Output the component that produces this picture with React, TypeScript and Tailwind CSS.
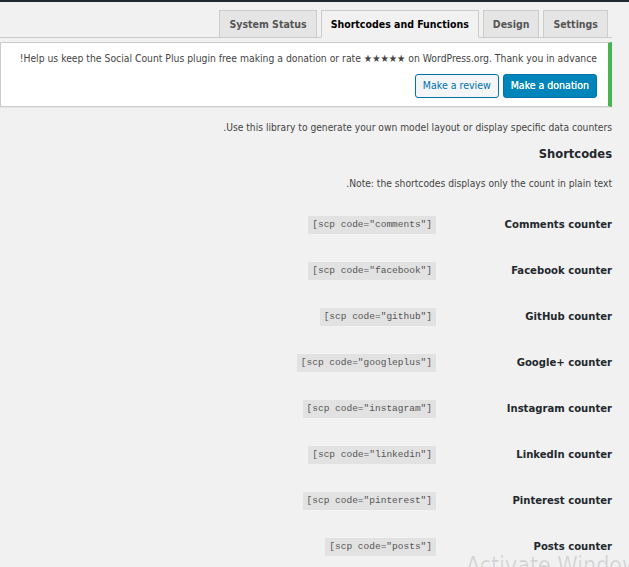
const rows = [
  { label: "Comments counter", code: 'comments' },
  { label: "Facebook counter", code: 'facebook' },
  { label: "GitHub counter", code: 'github' },
  { label: "Google+ counter", code: 'googleplus' },
  { label: "Instagram counter", code: 'instagram' },
  { label: "LinkedIn counter", code: 'linkedin' },
  { label: "Pinterest counter", code: 'pinterest' },
  { label: "Posts counter", code: 'posts' },
];

const tabs = [
  { name: "Settings", active: false },
  { name: "Design", active: false },
  { name: "Shortcodes and Functions", active: true },
  { name: "System Status", active: false },
];

function Tabs() {
  return (
    <div className="mr-[17px] flex flex-row-reverse items-end gap-[4px] border-b border-[#ccc] pr-[4px] pt-[8px]">
      {tabs.map((t) => (
        <div
          key={t.name}
          className={
            t.active
              ? "-mb-px border border-[#ccc] border-b-[#f1f1f1] bg-[#f1f1f1] px-[9px] text-[10.5px] font-bold leading-[26px] text-[#000]"
              : "border border-[#ccc] border-b-0 bg-[#e5e5e5] px-[9px] text-[10.5px] font-bold leading-[26px] text-[#555]"
          }
        >
          {t.name}
        </div>
      ))}
    </div>
  );
}

function Notice() {
  return (
    <div className="mr-[17px] mt-[4px] border border-[#ccc] border-r-[4px] border-r-[#46b450] bg-white pb-[8px] pr-[11px] pt-[7px] shadow-[0_1px_1px_rgba(0,0,0,0.04)]">
      <p className="whitespace-nowrap text-right text-[10.3px] leading-[17px] text-[#444]">
        !Help us keep the Social Count Plus plugin free making a donation or rate ★★★★★ on WordPress.org. Thank you in advance
      </p>
      <div className="mt-[7px] flex flex-row-reverse gap-[4px]">
        <button className="h-[24px] rounded-[3px] border border-[#0073aa] bg-[#0085ba] px-[7px] text-[10.5px] text-white [text-shadow:0_0_0.4px_#fff]">
          Make a donation
        </button>
        <button className="h-[24px] rounded-[3px] border border-[#0073aa] bg-[#f3f5f6] px-[7px] text-[10.5px] text-[#0073aa]">
          Make a review
        </button>
      </div>
    </div>
  );
}

export default function App() {
  return (
    <div className="relative h-[567px] w-[629px] overflow-hidden bg-[#f1f1f1] font-['DejaVu_Sans_Condensed','DejaVu_Sans',sans-serif]">
      <div className="h-[2px] bg-[#23282d]" />
      <Tabs />
      <Notice />
      <div className="mr-[17px] mt-[12px] text-right text-[#444]">
        <p className="text-[10.2px] leading-[17px]">.Use this library to generate your own model layout or display specific data counters</p>
        <h2 className="mt-[8px] text-[12.8px] font-bold leading-[20px] text-[#23282d]">Shortcodes</h2>
        <p className="mt-[11px] text-[10.2px] leading-[17px]">.Note: the shortcodes displays only the count in plain text</p>
        <div className="mt-[24px] flex flex-col gap-[28px]">
          {rows.map((r) => (
            <div key={r.code} className="flex flex-row-reverse items-center">
              <div className="w-[176px] text-[11.2px] font-bold leading-[18px] text-[#23282d]">{r.label}</div>
              <div className="flex flex-1 justify-end">
                <code className="bg-[#e2e2e2] px-[4px] py-[2px] font-['Liberation_Mono',monospace] text-[9.5px] leading-[14px] text-[#555]">
                  [scp code="{r.code}"]
                </code>
              </div>
            </div>
          ))}
        </div>
      </div>
      <div className="pointer-events-none absolute left-[466px] top-[550px] whitespace-nowrap text-[23px] leading-[30px] text-[rgba(0,0,0,0.12)]">
        Activate Windows
      </div>
    </div>
  );
}
